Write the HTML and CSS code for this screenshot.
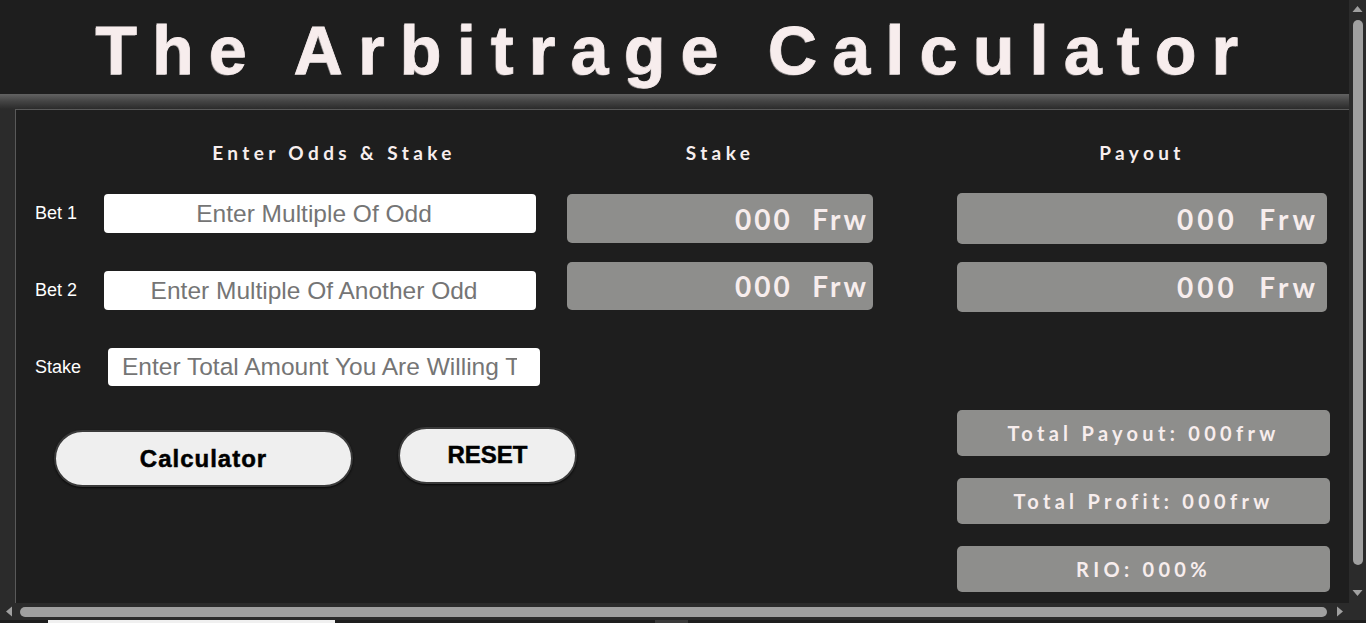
FILE: index.html
```html
<!DOCTYPE html>
<html lang="en">
<head>
<meta charset="utf-8">
<title>The Arbitrage Calculator</title>
<link rel="stylesheet" href="styles.css">
</head>
<body>
<div class="window">
  <div class="viewport">
    <header class="header">
      <h1 class="title">The Arbitrage Calculator</h1>
    </header>
    <section class="panel">
      <div class="board">
        <div class="col col-input">
          <h2 class="col-head head-input">Enter Odds &amp; Stake</h2>
          <div class="field field-1">
            <label class="field-label" for="bet1">Bet 1</label>
            <input class="inp inp-center" id="bet1" type="text" placeholder="Enter Multiple Of Odd">
          </div>
          <div class="field field-2">
            <label class="field-label" for="bet2">Bet 2</label>
            <input class="inp inp-center" id="bet2" type="text" placeholder="Enter Multiple Of Another Odd">
          </div>
          <div class="field field-3">
            <label class="field-label" for="stake">Stake</label>
            <input class="inp inp-left" id="stake" type="text" placeholder="Enter Total Amount You Are Willing To Stake">
          </div>
          <div class="actions">
            <button class="btn btn-calc" type="button">Calculator</button>
            <button class="btn btn-reset" type="button">RESET</button>
          </div>
        </div>
        <div class="col col-stake">
          <h2 class="col-head">Stake</h2>
          <div class="out out-stake out-stake-1">000  Frw</div>
          <div class="out out-stake out-stake-2">000  Frw</div>
        </div>
        <div class="col col-payout">
          <h2 class="col-head head-payout">Payout</h2>
          <div class="out out-pay out-pay-1">000  Frw</div>
          <div class="out out-pay out-pay-2">000  Frw</div>
          <div class="summary summary-first">Total Payout: 000frw</div>
          <div class="summary">Total Profit: 000frw</div>
          <div class="summary">RIO: 000%</div>
        </div>
      </div>
    </section>
  </div>

  <div class="vbar">
    <span class="arrow">
      <svg width="17" height="17" viewBox="0 0 17 17"><path d="M3.5 12 L8.5 6 L13.5 12 Z" fill="#a0a0a0"/></svg>
    </span>
    <span class="vthumb"></span>
    <span class="bar-fill"></span>
    <span class="arrow">
      <svg width="17" height="17" viewBox="0 0 17 17"><path d="M3.5 4 L13.5 4 L8.5 10 Z" fill="#a0a0a0"/></svg>
    </span>
  </div>

  <div class="hbar">
    <span class="arrow">
      <svg width="17" height="17" viewBox="0 0 17 17"><path d="M12 3.5 L12 13.5 L6 8.5 Z" fill="#a0a0a0"/></svg>
    </span>
    <span class="hthumb"></span>
    <span class="bar-fill"></span>
    <span class="arrow">
      <svg width="17" height="17" viewBox="0 0 17 17"><path d="M5 3.5 L11 8.5 L5 13.5 Z" fill="#a0a0a0"/></svg>
    </span>
  </div>

  <div class="corner"></div>
</div>
<div class="below">
  <span class="below-white"></span>
  <span class="below-gray"></span>
</div>
</body>
</html>
```

FILE: styles.css
```css
* { box-sizing: border-box; }

html, body {
  margin: 0;
  padding: 0;
  background: #1e1e1e;
  overflow: hidden;
}

body {
  font-family: "Liberation Sans", Arial, sans-serif;
  color: #f7eeee;
}

/* Window with its scroll bars */
.window {
  display: grid;
  grid-template-columns: 1349px 17px;
  grid-template-rows: 603px 17px;
  width: 1366px;
  height: 620px;
}

.viewport {
  overflow: hidden;
  background: #1e1e1e;
}

.vbar {
  display: flex;
  flex-direction: column;
  align-items: center;
  background: #2b2b2b;
}

.hbar {
  display: flex;
  align-items: center;
  background: #2b2b2b;
}

.corner { background: #2b2b2b; }

.arrow {
  display: block;
  width: 17px;
  height: 17px;
  flex: none;
}

.arrow svg { display: block; }

.bar-fill { flex: 1; }

.vthumb {
  width: 10px;
  height: 545px;
  margin-top: 3px;
  margin-left: 1px;
  border-radius: 5px;
  background: #a0a0a0;
}

.hthumb {
  height: 10px;
  width: 1307px;
  margin-left: 3px;
  border-radius: 5px;
  background: #a0a0a0;
}

/* Header */
.header {
  width: 1349px;
  height: 94px;
  padding-top: 12px;
  text-align: center;
}

.title {
  margin: 0;
  font-family: "Liberation Sans", Arial, sans-serif;
  font-weight: 700;
  font-size: 68px;
  line-height: 76px;
  letter-spacing: 15.3px;
  color: #f7eded;
  -webkit-text-stroke: 0.8px #f7eded;
  text-shadow: -1px 1px 0 #8c8888;
  white-space: nowrap;
}

/* Panel */
.panel {
  width: 1362px;
  padding: 15px 0 0 15px;
  background: linear-gradient(to bottom, #626262 0px, #454545 7px, #2e2e2e 14px, #2b2b2b 15px);
}

.board {
  display: flex;
  align-items: flex-start;
  background: #1e1e1e;
  border-top: 1px solid #595959;
  border-left: 1px solid #595959;
  padding: 31px 0 39px 0;
}

.col {
  display: flex;
  flex-direction: column;
  flex: none;
}

.col-head {
  margin: 0;
  height: 24px;
  line-height: 24px;
  font-family: Lato, "Open Sans", sans-serif;
  font-weight: 700;
  font-size: 19px;
  letter-spacing: 4.4px;
  text-align: center;
  color: #f7eeee;
}

/* Input column */
.col-input {
  margin-left: 19px;
  width: 505px;
}

.head-input {
  padding-left: 93px;
}

.field {
  display: flex;
  align-items: center;
  gap: 27px;
  margin-top: 38px;
}

.field-1 { margin-top: 29px; }

.field-label {
  font-family: "Liberation Sans", Arial, sans-serif;
  font-size: 18px;
  color: #ffffff;
}

.inp {
  flex: none;
  width: 432px;
  height: 39px;
  border: none;
  border-radius: 4px;
  background: #ffffff;
  font-family: "Liberation Sans", Arial, sans-serif;
  font-size: 24.5px;
  color: #222;
  outline: none;
}

.inp::placeholder { color: #757575; }

.inp-center {
  text-align: center;
  padding: 0 12px 0 0;
}

.inp-left {
  height: 38px;
  text-align: left;
  padding: 0 23px 0 14px;
}

.actions {
  display: flex;
  align-items: flex-start;
  margin-top: 41px;
}

.btn {
  flex: none;
  height: 57px;
  border: 2px solid #3a3a3a;
  border-radius: 29px;
  background: #efefef;
  color: #000;
  font-family: "Liberation Sans", Arial, sans-serif;
  font-weight: 700;
  font-size: 24px;
  -webkit-text-stroke: 0.5px #000;
  box-shadow: 0 1px 2px rgba(0, 0, 0, 0.8);
  cursor: pointer;
}

.btn-calc {
  width: 299px;
  margin: 3px 0 0 19px;
  letter-spacing: 1px;
  padding-top: 2px;
}

.btn-reset {
  width: 179px;
  margin-left: 45px;
  padding-bottom: 2px;
}

/* Output columns */
.out {
  background: #8e8e8c;
  border-radius: 5px;
  color: #f7eded;
  font-family: Lato, "Open Sans", sans-serif;
  font-weight: 700;
  font-size: 28px;
  letter-spacing: 3px;
  white-space: pre;
  display: flex;
  align-items: center;
  justify-content: flex-end;
}

.col-stake {
  margin-left: 27px;
  width: 306px;
}

.out-stake { padding-right: 4px; }
.out-stake-1 { height: 49px; margin-top: 29px; }
.out-stake-2 { height: 48px; margin-top: 19px; }

.col-payout {
  margin-left: 84px;
  width: 373px;
}

.head-payout { width: 370px; }

.out-pay {
  width: 370px;
  padding-right: 8px;
  letter-spacing: 4px;
}
.out-pay-1 { height: 51px; margin-top: 28px; }
.out-pay-2 { height: 50px; margin-top: 18px; }

.summary {
  height: 46px;
  margin-top: 22px;
  background: #8e8e8c;
  border-radius: 5px;
  color: #f7eded;
  font-family: Lato, "Open Sans", sans-serif;
  font-weight: 700;
  font-size: 20px;
  letter-spacing: 4.3px;
  display: flex;
  align-items: center;
  justify-content: center;
}

.summary-first { margin-top: 98px; }

/* Strip below the window */
.below {
  height: 3px;
  display: flex;
  background: #1e1e1e;
}

.below-white {
  width: 287px;
  margin-left: 48px;
  background: #f0f0f0;
}

.below-gray {
  width: 33px;
  margin-left: 320px;
  background: #3a3a3a;
}
```
